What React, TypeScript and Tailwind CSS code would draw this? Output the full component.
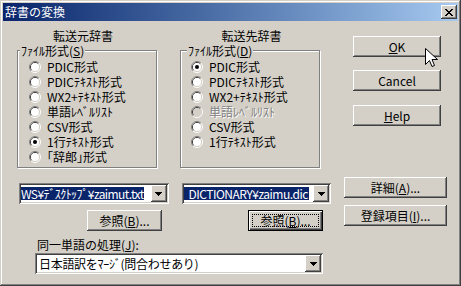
import React from 'react';

// Windows 2000 風ダイアログ「辞書の変換」

const RAISED =
  'bg-[#d4d0c8] shadow-[inset_-1px_-1px_#404040,inset_1px_1px_#ffffff,inset_-2px_-2px_#808080,inset_2px_2px_#d4d0c8]';
const SUNKEN =
  'bg-white shadow-[inset_1px_1px_#808080,inset_-1px_-1px_#ffffff,inset_2px_2px_#404040,inset_-2px_-2px_#d4d0c8]';

function U({ children }: { children: React.ReactNode }) {
  return <span className="underline underline-offset-[1px]">{children}</span>;
}

function Btn({ className, children }: { className: string; children: React.ReactNode }) {
  return (
    <div className={`${RAISED} h-[21px] flex items-center justify-center text-[12px] leading-[12px] ${className}`}>
      {children}
    </div>
  );
}

function DefaultBtn({ className, children }: { className: string; children: React.ReactNode }) {
  return (
    <div
      className={`h-[21px] border border-black bg-[#d4d0c8] p-[3px] flex shadow-[inset_1px_1px_#ffffff,inset_-1px_-1px_#404040,inset_-2px_-2px_#808080] ${className}`}
    >
      <div className="flex-1 border border-dotted border-black flex items-center justify-center text-[12px] leading-[12px]">
        {children}
      </div>
    </div>
  );
}

function Radio({ checked, disabled }: { checked?: boolean; disabled?: boolean }) {
  return (
    <svg width="12" height="12" viewBox="0 0 12 12" className="shrink-0">
      <path d="M2.11 9.89A5.5 5.5 0 0 1 9.89 2.11" stroke="#808080" fill="none" />
      <path d="M9.89 2.11A5.5 5.5 0 0 1 2.11 9.89" stroke="#ffffff" fill="none" />
      <path d="M2.82 9.18A4.5 4.5 0 0 1 9.18 2.82" stroke="#404040" fill="none" />
      <path d="M9.18 2.82A4.5 4.5 0 0 1 2.82 9.18" stroke="#d4d0c8" fill="none" />
      <circle cx="6" cy="6" r="4" fill={disabled ? '#d4d0c8' : '#ffffff'} />
      {checked && <circle cx="6" cy="6" r="2" fill="#000000" />}
    </svg>
  );
}

type Item = { label: string; checked?: boolean; disabled?: boolean };

function Group({
  title,
  legend,
  items,
  titleClass,
  legendClass,
  rowClass,
}: {
  title: string;
  legend: React.ReactNode;
  items: Item[];
  titleClass: string;
  legendClass: string;
  rowClass: string;
}) {
  return (
    <div className="w-[140px] flex flex-col">
      <div className={`mt-[9px] h-[12px] leading-[12px] text-[12px] text-center ${titleClass}`}>{title}</div>
      <div className="mt-[8px] h-[118px] border border-[#808080] shadow-[inset_1px_1px_#ffffff,1px_1px_#ffffff] flex flex-col">
        <div className={`-mt-[7px] self-start px-[1px] bg-[#d4d0c8] h-[13px] leading-[13px] text-[12px] ${legendClass}`}>
          {legend}
        </div>
        <div className="mt-[2px] flex flex-col">
          {items.map((it) => (
            <div key={it.label} className={`h-[15px] flex items-center gap-[6px] ${rowClass}`}>
              <Radio checked={it.checked} disabled={it.disabled} />
              <span
                className={`text-[12px] leading-[12px] whitespace-nowrap ${
                  it.disabled ? 'text-[#808080] [text-shadow:1px_1px_0_#ffffff]' : ''
                }`}
              >
                {it.label}
              </span>
            </div>
          ))}
        </div>
      </div>
    </div>
  );
}

function DropBtn() {
  return (
    <div className={`${RAISED} w-[16px] h-[17px] shrink-0 flex items-center justify-center`}>
      <svg width="7" height="4" viewBox="0 0 7 4" shapeRendering="crispEdges">
        <path d="M0 0h7v1H0zM1 1h5v1H1zM2 2h3v1H2zM3 3h1v1H3z" fill="#000" />
      </svg>
    </div>
  );
}

function Combo({ className, children }: { className: string; children: React.ReactNode }) {
  return (
    <div className={`${SUNKEN} h-[21px] p-[2px] flex ${className}`}>
      <div className="flex-1 min-w-0 overflow-hidden flex items-center">{children}</div>
      <DropBtn />
    </div>
  );
}

function CloseBtn() {
  return (
    <div className={`${RAISED} w-[16px] h-[14px] flex items-center justify-center`}>
      <svg width="8" height="7" viewBox="0 0 8 7" shapeRendering="crispEdges">
        <path
          d="M0 0h2v1H0zM6 0h2v1H6zM1 1h2v1H1zM5 1h2v1H5zM2 2h4v1H2zM3 3h2v1H3zM2 4h4v1H2zM1 5h2v1H1zM5 5h2v1H5zM0 6h2v1H0zM6 6h2v1H6z"
          fill="#000"
        />
      </svg>
    </div>
  );
}

const SRC_ITEMS: Item[] = [
  { label: 'PDIC形式' },
  { label: 'PDICﾃｷｽﾄ形式' },
  { label: 'WX2+ﾃｷｽﾄ形式' },
  { label: '単語ﾚﾍﾞﾙﾘｽﾄ' },
  { label: 'CSV形式' },
  { label: '1行ﾃｷｽﾄ形式', checked: true },
  { label: '｢辞郎｣形式' },
];

const DST_ITEMS: Item[] = [
  { label: 'PDIC形式', checked: true },
  { label: 'PDICﾃｷｽﾄ形式' },
  { label: 'WX2+ﾃｷｽﾄ形式' },
  { label: '単語ﾚﾍﾞﾙﾘｽﾄ', disabled: true },
  { label: 'CSV形式' },
  { label: '1行ﾃｷｽﾄ形式' },
];

export default function App() {
  return (
    <div className="relative w-[461px] h-[286px] bg-[#d4d0c8] p-[3px] flex flex-col text-black font-['Noto_Sans_CJK_JP',sans-serif] shadow-[inset_-1px_-1px_#404040,inset_1px_1px_#d4d0c8,inset_-2px_-2px_#808080,inset_2px_2px_#ffffff] overflow-hidden">
      {/* タイトルバー */}
      <div className="h-[18px] shrink-0 flex items-center bg-gradient-to-r from-[#0a246a] to-[#a6caf0] pl-[2px] pr-[1px]">
        <span className="flex-1 text-white text-[12px] leading-[12px]">辞書の変換</span>
        <CloseBtn />
      </div>

      <div className="flex flex-1">
        {/* 左側 */}
        <div className="ml-[14px] w-[314px] flex flex-col">
          <div className="flex gap-[23px]">
            <Group
              title="転送元辞書"
              legend={<>ﾌｧｲﾙ形式(<U>S</U>)</>}
              items={SRC_ITEMS}
              titleClass="pr-[8px]"
              legendClass="ml-[2px]"
              rowClass="pl-[11px]"
            />
            <Group
              title="転送先辞書"
              legend={<>ﾌｧｲﾙ形式(<U>D</U>)</>}
              items={DST_ITEMS}
              titleClass="pl-[3px]"
              legendClass="ml-[6px]"
              rowClass="pl-[10px]"
            />
          </div>

          <div className="mt-[15px] flex">
            <Combo className="ml-[2px] w-[150px]">
              <span className="bg-[#0a246a] text-white h-[13px] leading-[13px] text-[12px] tracking-[-0.6px] whitespace-nowrap">
                WS¥ﾃﾞｽｸﾄｯﾌﾟ¥zaimut.txt
              </span>
            </Combo>
            <Combo className="ml-[13px] w-[150px]">
              <span className="bg-[#0a246a] text-white h-[13px] leading-[13px] text-[12px] tracking-[-0.5px] whitespace-nowrap pl-[5px] pr-[1px]">
                DICTIONARY¥zaimu.dic
              </span>
            </Combo>
          </div>

          <div className="mt-[6px] flex">
            <Btn className="ml-[70px] w-[75px]">
              参照(<U>B</U>)...
            </Btn>
            <DefaultBtn className="ml-[86px] w-[75px]">
              参照(<U>B</U>)...
            </DefaultBtn>
          </div>

          <div className="mt-[8px] ml-[20px] h-[12px] leading-[12px] text-[12px]">
            同一単語の処理(<U>J</U>):
          </div>
          <Combo className="mt-[2px] ml-[18px] w-[288px]">
            <span className="pl-[2px] h-[13px] leading-[13px] text-[12px] tracking-[-0.3px] whitespace-nowrap">
              日本語訳をﾏｰｼﾞ(問合わせあり)
            </span>
          </Combo>
        </div>

        {/* 右側ボタン */}
        <div className="ml-[13px] w-[103px] flex flex-col">
          <Btn className="mt-[15px] ml-[9px] w-[88px]">
            <U>O</U>K
          </Btn>
          <Btn className="mt-[13px] ml-[9px] w-[88px]">Cancel</Btn>
          <Btn className="mt-[14px] ml-[9px] w-[88px]">
            <U>H</U>elp
          </Btn>
          <Btn className="mt-[51px] w-[103px]">
            詳細(<U>A</U>)...
          </Btn>
          <Btn className="mt-[7px] w-[103px]">
            登録項目(<U>I</U>)...
          </Btn>
        </div>
      </div>

      {/* マウスカーソル */}
      <svg className="absolute left-[425px] top-[48px]" width="13" height="20" viewBox="0 0 13 20">
        <path
          d="M0.5 0.5V16.5L4.5 12.5L7 18.5L9.5 17.5L7 11.5H12.5Z"
          fill="#ffffff"
          stroke="#000000"
          strokeLinejoin="miter"
        />
      </svg>
    </div>
  );
}
